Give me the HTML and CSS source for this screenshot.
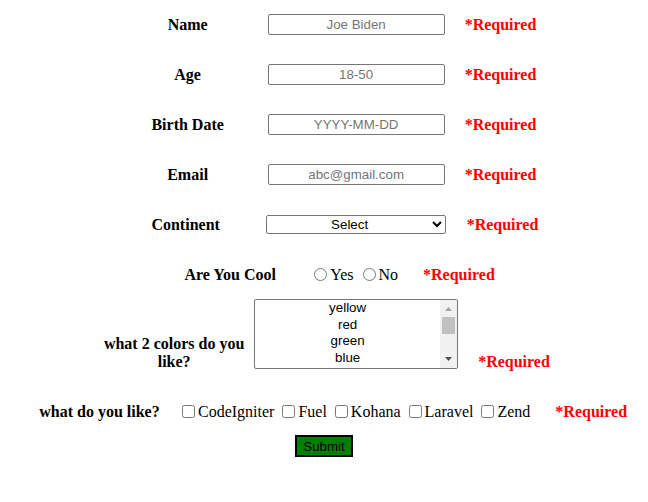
FILE: index.html
```html
<!DOCTYPE html>
<html>
<head>
<meta charset="utf-8">
<title>Form</title>
<link rel="stylesheet" href="styles.css">
</head>
<body>
<form class="form">
  <div class="row">
    <div class="label">Name</div>
    <input class="text" type="text" placeholder="Joe Biden">
    <div class="req">*Required</div>
  </div>
  <div class="row">
    <div class="label">Age</div>
    <input class="text" type="text" placeholder="18-50">
    <div class="req">*Required</div>
  </div>
  <div class="row">
    <div class="label">Birth Date</div>
    <input class="text" type="text" placeholder="YYYY-MM-DD">
    <div class="req">*Required</div>
  </div>
  <div class="row">
    <div class="label">Email</div>
    <input class="text" type="text" placeholder="abc@gmail.com">
    <div class="req">*Required</div>
  </div>
  <div class="row">
    <div class="label">Continent</div>
    <select class="drop">
      <option>Select</option>
      <option>Asia</option>
      <option>Africa</option>
      <option>Europe</option>
      <option>North America</option>
      <option>South America</option>
      <option>Australia</option>
    </select>
    <div class="req req-wide">*Required</div>
  </div>
  <div class="row">
    <div class="label label-w">Are You Cool</div>
    <div class="choices radios">
      <label class="opt"><input type="radio" name="cool" class="radio">Yes</label>
      <label class="opt"><input type="radio" name="cool" class="radio">No</label>
    </div>
    <div class="req req-cool">*Required</div>
  </div>
  <div class="row row-colors">
    <div class="label label-colors">what 2 colors do you like?</div>
    <div class="list" role="listbox" aria-multiselectable="true">
      <div class="list-items">
        <div class="list-opt" role="option">yellow</div>
        <div class="list-opt" role="option">red</div>
        <div class="list-opt" role="option">green</div>
        <div class="list-opt" role="option">blue</div>
      </div>
      <div class="scrollbar">
        <div class="sb-btn">
          <svg width="7" height="4" viewBox="0 0 7 4"><path d="M0 4 L3.5 0 L7 4 Z" fill="#a3a3a3"/></svg>
        </div>
        <div class="sb-track">
          <div class="sb-thumb"></div>
        </div>
        <div class="sb-btn sb-down">
          <svg width="7" height="4" viewBox="0 0 7 4"><path d="M0 0 L7 0 L3.5 4 Z" fill="#505050"/></svg>
        </div>
      </div>
    </div>
    <div class="req">*Required</div>
  </div>
  <div class="row row-like">
    <div class="label label-w label-like">what do you like?</div>
    <div class="choices checks">
      <label class="opt"><input type="checkbox" class="check">CodeIgniter</label>
      <label class="opt"><input type="checkbox" class="check">Fuel</label>
      <label class="opt"><input type="checkbox" class="check">Kohana</label>
      <label class="opt"><input type="checkbox" class="check">Laravel</label>
      <label class="opt"><input type="checkbox" class="check">Zend</label>
    </div>
    <div class="req req-like">*Required</div>
  </div>
  <div class="submit-row">
    <button type="button" class="submit">Submit</button>
  </div>
</form>
</body>
</html>
```
FILE: styles.css
```css
html, body {
  margin: 0;
  padding: 0;
  background: #ffffff;
}

body {
  font-family: "Liberation Serif", "Times New Roman", serif;
  font-size: 16px;
  color: #000000;
}

.form {
  display: flex;
  flex-direction: column;
  padding-top: 4px;
}

.row {
  display: flex;
  justify-content: center;
  align-items: center;
  height: 40px;
  margin-bottom: 10px;
}

.label {
  width: 152px;
  font-weight: bold;
  text-align: center;
  margin-right: 4px;
  padding-top: 2px;
}

.label-w {
  width: 154px;
  margin-right: 0;
}

.label-like {
  width: 151px;
  padding-left: 3px;
}

.text {
  box-sizing: border-box;
  width: 177px;
  height: 21px;
  padding: 1px 2px;
  border: 1px solid #767676;
  border-radius: 2px;
  font-family: "Liberation Sans", Arial, sans-serif;
  font-size: 13.333px;
  text-align: center;
  margin: 0;
}

.text::placeholder {
  color: #757575;
}

.req {
  color: #ff0000;
  font-weight: bold;
  margin-left: 20px;
  white-space: nowrap;
  padding-top: 2px;
}

.req-wide {
  margin-left: 21px;
}

.drop {
  box-sizing: border-box;
  width: 180px;
  height: 19px;
  margin: 0;
  border: 1px solid #767676;
  border-radius: 2px;
  background: #ffffff;
  font-family: "Liberation Sans", Arial, sans-serif;
  font-size: 13.333px;
  color: #000000;
  text-align: center;
  text-align-last: center;
}

.choices {
  display: flex;
  align-items: center;
  white-space: nowrap;
  padding-top: 1px;
}

.opt {
  display: flex;
  align-items: center;
}

.radio {
  width: 13px;
  height: 13px;
  margin: 0 3px 0 5px;
}

.radios {
  padding-left: 2px;
}

.radios .opt + .opt .radio {
  margin-left: 9px;
}

.req-cool {
  margin-left: 25px;
}

.row-colors {
  height: auto;
  align-items: flex-end;
  margin-top: -5px;
  margin-bottom: 0;
}

.label-colors {
  line-height: 18px;
  margin-bottom: -2px;
  padding-top: 0;
}

.list {
  box-sizing: border-box;
  width: 204px;
  height: 70px;
  display: flex;
  border: 1px solid #767676;
  border-radius: 2px;
  background: #ffffff;
  font-family: "Liberation Sans", Arial, sans-serif;
  font-size: 13.333px;
  color: #000000;
  overflow: hidden;
}

.list-items {
  flex: 1;
  display: flex;
  flex-direction: column;
}

.list-opt {
  height: 16.7px;
  line-height: 16.7px;
  text-align: center;
  padding: 0 2px;
}

.scrollbar {
  width: 17px;
  display: flex;
  flex-direction: column;
  background: #f1f1f1;
}

.sb-btn {
  height: 17px;
  display: flex;
  align-items: center;
  justify-content: center;
}

.sb-btn svg {
  display: block;
}

.sb-down {
  height: 16px;
  align-items: flex-start;
  padding-top: 5px;
  box-sizing: border-box;
}

.sb-track {
  flex: 1;
  padding: 0 2px;
}

.sb-thumb {
  height: 17px;
  background: #c1c1c1;
}

.row-colors .req {
  line-height: 18px;
  margin-bottom: -2px;
  padding-top: 0;
}

.row-like {
  margin-top: 22px;
  margin-bottom: 4px;
}

.checks {
  padding-left: 3px;
}

.check {
  width: 13px;
  height: 13px;
  margin: 0 3px 0 4px;
}

.checks .opt + .opt .check {
  margin-left: 8px;
}

.req-like {
  margin-left: 25px;
}

.submit-row {
  display: flex;
  justify-content: center;
}

.submit {
  box-sizing: border-box;
  height: 22px;
  padding: 1px 6px;
  border: 2px solid #000000;
  background: #008000;
  color: #000000;
  font-family: "Liberation Sans", Arial, sans-serif;
  font-size: 13.333px;
  margin: 0;
}
```
